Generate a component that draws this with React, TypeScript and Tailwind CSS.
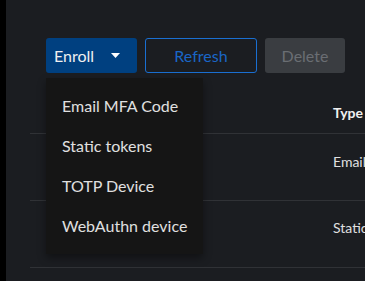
import { useState } from 'react';

const enrollOptions = ['Email MFA Code', 'Static tokens', 'TOTP Device', 'WebAuthn device'];

const devices = [
  { type: 'Email', pad: 'pt-[16px]' },
  { type: 'Static', pad: 'pt-[15px]' },
];

function Caret() {
  return (
    <svg width="9" height="5" viewBox="0 0 9 5" className="ml-[17px]">
      <path d="M0 0h9L4.5 5z" fill="#ffffff" />
    </svg>
  );
}

export default function App() {
  const [open] = useState(true);

  return (
    <div className="flex h-[281px] w-[365px] overflow-hidden bg-black font-['Lato',sans-serif]">
      <div className="w-[6px] shrink-0" />
      <div className="min-w-0 flex-1 overflow-hidden bg-[#1b1d21] pl-[24px] pt-[38px]">
        {/* toolbar */}
        <div className="relative flex gap-[8px] pl-[16px]">
          <button className="flex h-[35px] w-[91px] items-center rounded-[3px] bg-[#004080] pl-[8px] text-[16px] text-[#f0f0f0]">
            Enroll
            <Caret />
          </button>
          <button className="h-[35px] w-[112px] rounded-[3px] border border-[#1a6fd1] text-[16px] text-[#1a66c6]">
            Refresh
          </button>
          <button className="h-[35px] w-[80px] rounded-[3px] bg-[#3a3d41] text-[16px] text-[#6a6e73]">
            Delete
          </button>

          {open && (
            <ul className="absolute left-[16px] top-[40px] z-10 w-[157px] bg-[#151515] py-[8px] shadow-[0_4px_8px_rgba(0,0,0,0.4)]">
              {enrollOptions.map((option) => (
                <li
                  key={option}
                  className="whitespace-nowrap px-[16px] py-[8px] text-[16px] leading-[24px] text-[#e0e0e0]"
                >
                  {option}
                </li>
              ))}
            </ul>
          )}
        </div>

        {/* devices table */}
        <div className="mt-[16px] w-[400px]">
          <div className="flex h-[45px] border-b border-[#303236] pt-[14px]">
            <div className="w-[303px] shrink-0" />
            <div className="text-[14px] font-bold leading-[20px] text-[#f0f0f0]">Type</div>
          </div>
          {devices.map((device) => (
            <div key={device.type} className={`flex h-[67px] border-b border-[#303236] ${device.pad}`}>
              <div className="w-[303px] shrink-0" />
              <div className="text-[14px] leading-[24px] text-[#e0e0e0]">{device.type}</div>
            </div>
          ))}
        </div>
      </div>
    </div>
  );
}
